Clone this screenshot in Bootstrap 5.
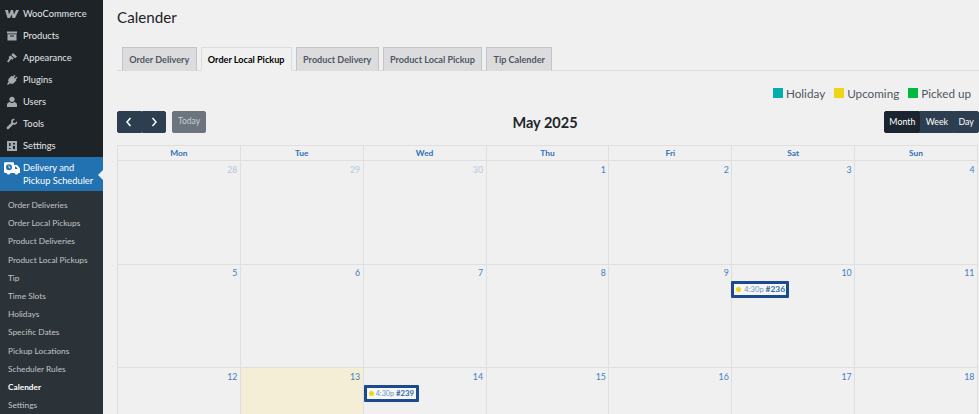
<!DOCTYPE html>
<html lang="en">

<head>
    <meta charset="UTF-8">
    <meta name="viewport" content="width=device-width, initial-scale=1.0">
    <title>Calender</title>
    <link href="https://cdn.jsdelivr.net/npm/bootstrap@5.3.0/dist/css/bootstrap.min.css" rel="stylesheet">
    <style>
        html, body { height: 414px; overflow: hidden; }
        body { background: #f0f0f1; font-family: "Lato", "Noto Sans", sans-serif; color: #3c434a; }
        .wp-side { width: 103px; flex: none; height: 414px; background: #1d2327; overflow: hidden; padding-top: 3px; }
        .wp-item { height: 22px; font-size: 9.3px; color: #e4e6e7; padding-left: 23px; line-height: 22px; position: relative; white-space: nowrap; }
        .wp-item svg { position: absolute; left: 6px; top: 5px; width: 12px; height: 12px; fill: #a7aaad; }
        .wp-item svg.woo { left: 5px; top: 6px; width: 14px; height: 10px; }
        .wp-current { background: #2271b1; color: #fff; height: 34px; line-height: 12.5px; padding-top: 5px; }
        .wp-current svg { left: 4px; top: 5px; width: 16px; height: 14px; fill: #fff; }
        .wp-current::after { content: ""; position: absolute; right: 0; top: 13px; border: 5px solid transparent; border-right-color: #f0f0f1; border-left: 0; }
        .wp-sub { background: #2c3338; padding-top: 5px; height: 223px; }
        .wp-sub a { display: block; height: 18.2px; line-height: 18.2px; font-size: 8.3px; color: #c3c4c7; padding-left: 8px; text-decoration: none; white-space: nowrap; }
        .wp-sub a.on { color: #fff; font-weight: 700; }
        .wp-main { flex: 1; min-width: 0; padding-left: 14px; }
        .page-ttl { font-size: 15.2px; line-height: 20px; margin: 7px 0 20px; color: #1d2327; font-weight: 400; }
        .tab-row { border-bottom: 1px solid #dcdcde; padding-left: 5px; gap: 4px; height: 24px; flex-wrap: nowrap; }
        .tab-row .nav-link { height: 24px; padding: 0 6.3px; line-height: 23px; font-size: 9.1px; font-weight: 700; color: #50575e; background: #dcdcde; border: 1px solid #c3c4c7; border-bottom-color: #dcdcde; border-radius: 0; margin: 0; white-space: nowrap; }
        .tab-row .nav-link.active { background: #f0f0f1; color: #000; border-color: #dcdcde; border-bottom-color: #f0f0f1; }
        .legend-row { gap: 9px; height: 40px; padding: 4px 8px 0 0; font-size: 11.7px; line-height: 13px; color: #50575e; }
        .swatch { width: 10px; height: 10px; display: inline-block; margin-right: 3px; }
        .cal-bar { height: 34px; }
        .cal-btn { background: #2c3e50; color: #fff; font-size: 8.8px; border: 1px solid #2c3e50; border-radius: 0; padding: 0 4.2px; height: 21.5px; line-height: 19px; }
        .cal-btn.on { background: #1a252f; border-color: #1a252f; }
        .cal-btn svg { width: 8px; height: 10px; fill: none; stroke: #fff; stroke-width: 1.5; display: block; }
        .nav-pair .cal-btn { width: 24.5px; padding: 0; display: flex; align-items: center; justify-content: center; }
        .cal-today { background: #6c757d; border-color: #6c757d; color: #c9ccd0; border-radius: 2px; margin-left: 6px; padding: 0 5px; font-size: 8.5px; }
        .nav-pair .cal-btn:first-child, .view-pair .cal-btn:first-child { border-radius: 2px 0 0 2px; }
        .nav-pair .cal-btn:last-child, .view-pair .cal-btn:last-child { border-radius: 0 2px 2px 0; }
        .cal-ttl { font-size: 14.5px; font-weight: 700; color: #212529; margin: 0; line-height: 24px; position: absolute; left: -6px; right: 0; text-align: center; }
        .cal-grid { display: grid; grid-template-columns: repeat(7, 1fr); width: 861px; border-top: 1px solid #dfdfe0; border-left: 1px solid #dfdfe0; }
        .cal-head, .cal-day { border-right: 1px solid #dfdfe0; border-bottom: 1px solid #dfdfe0; }
        .cal-head { height: 15px; line-height: 14px; text-align: center; font-size: 8.4px; font-weight: 700; color: #2f72b5; }
        .cal-day { height: 103.5px; padding: 2.5px 2.5px 0 0; text-align: right; font-size: 8.8px; line-height: 12px; color: #3f7fbd; }
        .cal-day.off { color: #b5c9dc; }
        .cal-day.now { background: #f4eed7; }
        .cal-ev { display: flex; align-items: center; gap: 3px; height: 17px; margin: 2px 0 0 0; padding-left: 2px; border: 3px solid #1c4a91; background: #f6f6f7; font-size: 7.6px; line-height: 11px; color: #6b95bd; white-space: nowrap; border-radius: 1px; }
        .cal-ev b { color: #2f6aa5; font-weight: 700; font-size: 8.4px; }
        .cal-dot { width: 5px; height: 5px; flex: none; border-radius: 50%; background: #eed518; }
        .ev-a { width: 58px; margin-left: -1px; }
        .ev-b { width: 55px; gap: 2px; font-size: 7.2px; }
        .ev-b b { font-size: 7.8px; }
    </style>
</head>

<body class="d-flex">
    <div class="wp-side">
        <div class="wp-item"><svg class="woo" viewBox="0 0 14 10"><path d="M0 1h3l1 4.500L6 1h2l1 4.500L11 1h3l-4 8H7.500l-1-3.500L5 9H2.500z"/></svg>WooCommerce</div>
        <div class="wp-item"><svg viewBox="0 0 12 12"><path d="M1 1.500h10v2H1zM1.500 4.200h9v6.300h-9zM4 5.500v1h4v-1z" fill-rule="evenodd"/></svg>Products</div>
        <div class="wp-item"><svg viewBox="0 0 12 12"><path d="M7 1l4 3.500-2 1.800L5.300 3zM4.600 3.600l3 3-1 1.200-1.400-.7-2.700 3.400-1.400-.9 2.300-3.500-.9-1.200z"/></svg>Appearance</div>
        <div class="wp-item"><svg viewBox="0 0 12 12"><path d="M8.500 1l1 .8L8 3.600l.9.8 1.600-1.700 1 .9L9.800 5.800l.6.600-3 3c-1.300.7-2.600.6-3.500-.2L2 11 1 10l1.700-1.900c-.7-1-.7-2.200 0-3.400l3-3 .7.700z"/></svg>Plugins</div>
        <div class="wp-item"><svg viewBox="0 0 12 12"><circle cx="6" cy="3.300" r="2.600"/><path d="M1 11V8.500C1 7 3 6 3.800 6c.6.600 1.400.9 2.200.9S7.600 6.600 8.200 6C9 6 11 7 11 8.500V11z"/></svg>Users</div>
        <div class="wp-item"><svg viewBox="0 0 12 12"><path d="M11 3.200 9 5.100 7.200 4.700 6.900 3 8.900 1C7.400.500 5.800 1 5.300 2.400c-.3.800-.2 1.600.1 2.300L1 9.100c-.5.500-.5 1.300 0 1.800s1.300.5 1.800 0l4.400-4.400c.7.300 1.500.3 2.200.1C10.800 6 11.500 4.700 11 3.200z"/></svg>Tools</div>
        <div class="wp-item"><svg viewBox="0 0 12 12"><path d="M1 1h10v10H1zM3 3v3h1.500V3zM7 3v1.500H9V3zM3 8v1h1.500V8zM7 6v3h2V6z" fill-rule="evenodd"/></svg>Settings</div>
        <div class="wp-item wp-current"><svg viewBox="0 0 16 14"><path d="M0 1.500C0 .8.500.3 1.200.3h7.600c.7 0 1.200.5 1.200 1.200V3h3l3 3.500V11h-1.600a2 2 0 0 1-3.900 0H6.500a2 2 0 0 1-3.900 0H1.200C.5 11 0 10.500 0 9.800zM11 4.500V7h2.800l-2-2.500z" fill-rule="evenodd"/><circle cx="5" cy="5.200" r="3" fill="#2271b1"/><path d="M4.600 3.400h.8v1.700l1.200.7-.4.700-1.600-1z"/></svg>Delivery and<br>Pickup Scheduler</div>
        <div class="wp-sub">
            <a href="#">Order Deliveries</a>
            <a href="#">Order Local Pickups</a>
            <a href="#">Product Deliveries</a>
            <a href="#">Product Local Pickups</a>
            <a href="#">Tip</a>
            <a href="#">Time Slots</a>
            <a href="#">Holidays</a>
            <a href="#">Specific Dates</a>
            <a href="#">Pickup Locations</a>
            <a href="#">Scheduler Rules</a>
            <a href="#" class="on">Calender</a>
            <a href="#">Settings</a>
        </div>
    </div>

    <div class="wp-main">
        <h1 class="page-ttl">Calender</h1>
        <ul class="nav nav-tabs tab-row">
            <li class="nav-item"><a class="nav-link" href="#">Order Delivery</a></li>
            <li class="nav-item"><a class="nav-link active" href="#">Order Local Pickup</a></li>
            <li class="nav-item"><a class="nav-link" href="#">Product Delivery</a></li>
            <li class="nav-item"><a class="nav-link" href="#">Product Local Pickup</a></li>
            <li class="nav-item"><a class="nav-link" href="#">Tip Calender</a></li>
        </ul>
        <div class="d-flex justify-content-end align-items-center legend-row">
            <span class="d-flex align-items-center"><i class="swatch" style="background:#00aeae"></i>Holiday</span>
            <span class="d-flex align-items-center"><i class="swatch" style="background:#eed518"></i>Upcoming</span>
            <span class="d-flex align-items-center"><i class="swatch" style="background:#00b93f"></i>Picked up</span>
        </div>
        <div class="d-flex justify-content-between cal-bar position-relative">
            <h2 class="cal-ttl">May 2025</h2>
            <div class="d-flex">
                <div class="d-flex nav-pair">
                    <button class="cal-btn" type="button"><svg viewBox="0 0 8 10"><path d="M5.500 1 2 5l3.500 4"/></svg></button>
                    <button class="cal-btn" type="button"><svg viewBox="0 0 8 10"><path d="M2.500 1 6 5 2.500 9"/></svg></button>
                </div>
                <button class="cal-btn cal-today" type="button">Today</button>
            </div>
            <div class="d-flex view-pair">
                <button class="cal-btn on" type="button">Month</button>
                <button class="cal-btn" type="button">Week</button>
                <button class="cal-btn" type="button">Day</button>
            </div>
        </div>
        <div class="cal-grid" id="grid"></div>
    </div>

    <script src="https://cdn.jsdelivr.net/npm/bootstrap@5.3.0/dist/js/bootstrap.bundle.min.js"></script>
    <script>
        const heads = ['Mon', 'Tue', 'Wed', 'Thu', 'Fri', 'Sat', 'Sun'];
        const days = [28, 29, 30, 1, 2, 3, 4, 5, 6, 7, 8, 9, 10, 11, 12, 13, 14, 15, 16, 17, 18];
        const events = { 10: ['4:30p', '#236', 'ev-a'], 14: ['4:30p', '#239', 'ev-b'] };
        let html = heads.map(h => `<div class="cal-head">${h}</div>`).join('');
        days.forEach((d, i) => {
            const cls = i < 3 ? ' off' : d === 13 ? ' now' : '';
            const ev = events[d];
            const evHtml = ev ? `<div class="cal-ev ${ev[2]}"><i class="cal-dot"></i><span>${ev[0]} <b>${ev[1]}</b></span></div>` : '';
            html += `<div class="cal-day${cls}">${d}${evHtml}</div>`;
        });
        document.querySelector('#grid').innerHTML = html;
    </script>
</body>

</html>
